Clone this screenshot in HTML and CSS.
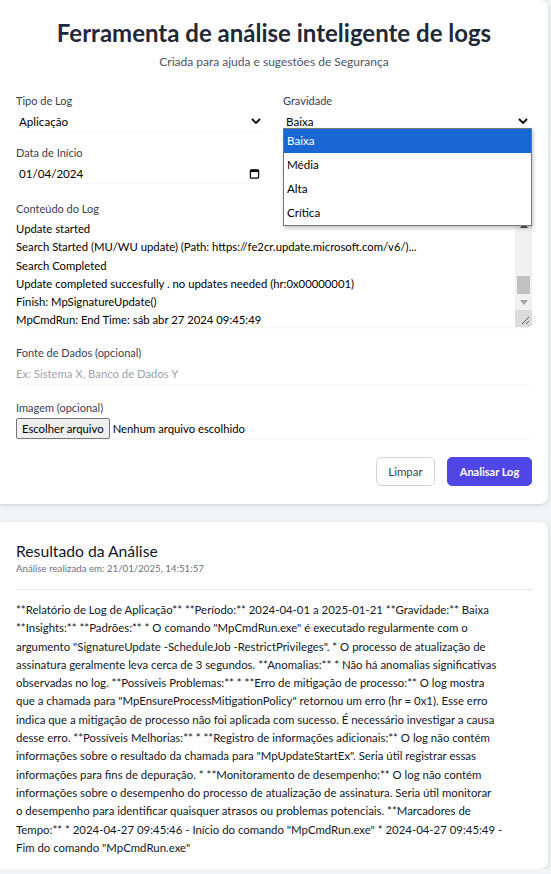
FILE: index.html
```html
<!DOCTYPE html>
<html lang="pt-BR">
<head>
<meta charset="utf-8">
<title>Ferramenta de análise inteligente de logs</title>
<link rel="stylesheet" href="styles.css">
</head>
<body>
<main class="page">
  <section class="card form-card">
    <h1 class="title">Ferramenta de análise inteligente de logs</h1>
    <p class="subtitle">Criada para ajuda e sugestões de Segurança</p>

    <div class="grid">
      <div class="field">
        <label class="label">Tipo de Log</label>
        <div class="control select">
          <span>Aplicação</span>
          <svg class="chev" viewBox="0 0 10 6" width="10" height="6"><path d="M1 1 L5 5 L9 1" fill="none" stroke="#000" stroke-width="1.8"/></svg>
        </div>
      </div>
      <div class="field gravity">
        <label class="label">Gravidade</label>
        <div class="control select">
          <span>Baixa</span>
          <svg class="chev" viewBox="0 0 10 6" width="10" height="6"><path d="M1 1 L5 5 L9 1" fill="none" stroke="#000" stroke-width="1.8"/></svg>
        </div>
        <ul class="dropdown">
          <li class="opt active">Baixa</li>
          <li class="opt">Média</li>
          <li class="opt">Alta</li>
          <li class="opt">Crítica</li>
        </ul>
      </div>
      <div class="field row2">
        <label class="label">Data de Início</label>
        <div class="control select">
          <span>01/04/2024</span>
          <svg class="cal" viewBox="0 0 12 12" width="11" height="11"><rect x="1.5" y="2" width="9" height="9" rx="1" fill="none" stroke="#000" stroke-width="1.3"/><rect x="1.5" y="2" width="9" height="2.4" fill="#000"/></svg>
        </div>
      </div>
    </div>

    <div class="field block">
      <label class="label">Conteúdo do Log</label>
      <div class="textarea">
        <div class="ta-text">
          <div>Update started</div>
          <div>Search Started (MU/WU update) (Path: https://fe2cr.update.microsoft.com/v6/)...</div>
          <div>Search Completed</div>
          <div>Update completed succesfully . no updates needed (hr:0x00000001)</div>
          <div>Finish: MpSignatureUpdate()</div>
          <div>MpCmdRun: End Time: sáb abr 27 2024 09:45:49</div>
        </div>
        <div class="scrollbar">
          <div class="track">
            <svg class="arrow" viewBox="0 0 8 5" width="8" height="5"><path d="M0 5 L4 0 L8 5 Z" fill="#505050"/></svg>
            <div class="thumb-space"><div class="thumb"></div></div>
            <svg class="arrow" viewBox="0 0 8 5" width="8" height="5"><path d="M0 0 L4 5 L8 0 Z" fill="#a3a3a3"/></svg>
          </div>
          <div class="resizer">
            <svg viewBox="0 0 10 10" width="10" height="10"><path d="M9 2 L2 9 M9 6 L6 9" stroke="#555" stroke-width="1"/></svg>
          </div>
        </div>
      </div>
    </div>

    <div class="field block">
      <label class="label">Fonte de Dados (opcional)</label>
      <div class="control input placeholder">Ex: Sistema X, Banco de Dados Y</div>
    </div>

    <div class="field block block-file">
      <label class="label">Imagem (opcional)</label>
      <div class="control input file">
        <span class="file-btn">Escolher arquivo</span>
        <span class="file-name">Nenhum arquivo escolhido</span>
      </div>
    </div>

    <div class="actions">
      <button class="btn btn-light">Limpar</button>
      <button class="btn btn-primary">Analisar Log</button>
    </div>
  </section>

  <section class="card result-card">
    <h2 class="result-title">Resultado da Análise</h2>
    <p class="result-date">Análise realizada em: 21/01/2025, 14:51:57</p>
    <hr class="divider">
    <p class="result-text">**Relatório de Log de Aplicação** **Período:** 2024-04-01 a 2025-01-21 **Gravidade:** Baixa<br>**Insights:** **Padrões:** * O comando "MpCmdRun.exe" é executado regularmente com o<br>argumento "SignatureUpdate -ScheduleJob -RestrictPrivileges". * O processo de atualização de<br>assinatura geralmente leva cerca de 3 segundos. **Anomalias:** * Não há anomalias significativas<br>observadas no log. **Possíveis Problemas:** * **Erro de mitigação de processo:** O log mostra<br>que a chamada para "MpEnsureProcessMitigationPolicy" retornou um erro (hr = 0x1). Esse erro<br>indica que a mitigação de processo não foi aplicada com sucesso. É necessário investigar a causa<br>desse erro. **Possíveis Melhorias:** * **Registro de informações adicionais:** O log não contém<br>informações sobre o resultado da chamada para "MpUpdateStartEx". Seria útil registrar essas<br>informações para fins de depuração. * **Monitoramento de desempenho:** O log não contém<br>informações sobre o desempenho do processo de atualização de assinatura. Seria útil monitorar<br>o desempenho para identificar quaisquer atrasos ou problemas potenciais. **Marcadores de<br>Tempo:** * 2024-04-27 09:45:46 - Início do comando "MpCmdRun.exe" * 2024-04-27 09:45:49 -<br>Fim do comando "MpCmdRun.exe"</p>
  </section>
</main>
</body>
</html>
```

FILE: styles.css
```css
* { box-sizing: border-box; }
html, body { margin: 0; padding: 0; }
body {
  background: #f3f4f6;
  font-family: "Lato", "Noto Sans", sans-serif;
  color: #111827;
  width: 551px;
  overflow: hidden;
}
.page {
  width: 548px;
  display: flex;
  flex-direction: column;
  gap: 18px;
}
.card {
  background: #fff;
  box-shadow: 0 1px 6px rgba(0,0,0,0.10), 0 1px 2px rgba(0,0,0,0.06);
}
.form-card {
  border-radius: 0 8px 8px 0;
  padding: 16px 16px 18px 16px;
}
.title {
  margin: 0;
  text-align: center;
  font-size: 24px;
  line-height: 34px;
  font-weight: 700;
  color: #1f2937;
}
.subtitle {
  margin: 3px 0 0;
  text-align: center;
  font-size: 12px;
  line-height: 18px;
  color: #4b5563;
}
.grid {
  margin-top: 22px;
  display: grid;
  grid-template-columns: 249px 249px;
  column-gap: 18px;
  row-gap: 14px;
}
.field { display: flex; flex-direction: column; position: relative; }
.label {
  font-size: 11px;
  line-height: 16px;
  color: #374151;
  margin-bottom: 2px;
}
.control {
  height: 20px;
  display: flex;
  align-items: center;
  font-size: 11.6px;
  color: #000;
  border-radius: 4px;
  box-shadow: 0 1px 2px rgba(0,0,0,0.04);
}
.select { justify-content: space-between; padding: 0 4px 0 3px; }
.cal { margin-right: 1px; }
.dropdown {
  position: absolute;
  left: 0;
  top: 35px;
  width: 249px;
  margin: 0;
  padding: 0;
  list-style: none;
  background: #fff;
  border: 1px solid #767676;
  box-shadow: 1px 2px 4px rgba(0,0,0,0.25);
  z-index: 5;
}
.opt {
  height: 24px;
  line-height: 24px;
  padding-left: 3px;
  font-size: 11.6px;
  color: #000;
}
.opt.active { background: #1a66d2; color: #fff; }
.block { margin-top: 18px; }
.block-file { margin-top: 16px; }
.textarea {
  height: 108px;
  display: flex;
  border-radius: 4px;
  overflow: hidden;
  box-shadow: 0 1px 2px rgba(0,0,0,0.05);
}
.ta-text {
  flex: 1;
  padding: 1px 0 0 0;
  font-size: 11.3px;
  line-height: 18.3px;
  color: #000;
  white-space: nowrap;
  overflow: hidden;
}
.scrollbar {
  width: 17px;
  display: flex;
  flex-direction: column;
}
.track {
  flex: 1;
  background: #f1f1f1;
  display: flex;
  flex-direction: column;
  align-items: center;
  padding: 4px 0 5px;
}
.thumb-space { flex: 1; display: flex; align-items: flex-end; width: 100%; padding: 0 2px 6px; }
.thumb { width: 100%; height: 18px; background: #c1c1c1; }
.resizer {
  height: 17px;
  background: #dcdcdc;
  display: flex;
  align-items: flex-end;
  justify-content: flex-end;
  padding: 0 2px 2px 0;
}
.input { height: 21px; padding-left: 0; }
.placeholder { color: #9ca3af; font-size: 11.3px; }
.file { gap: 3px; }
.file-btn {
  height: 21px;
  line-height: 19px;
  padding: 0 5px;
  background: #efefef;
  border: 1px solid #767676;
  border-radius: 2px;
  font-size: 11.3px;
  color: #000;
}
.file-name { font-size: 11.3px; }
.actions {
  margin-top: 18px;
  display: flex;
  justify-content: flex-end;
  gap: 12px;
}
.btn {
  height: 29px;
  border-radius: 5px;
  font-family: inherit;
  font-size: 11.5px;
  cursor: pointer;
}
.btn-light {
  width: 59px;
  padding: 0;
  background: #fff;
  border: 1px solid #d1d5db;
  color: #374151;
}
.btn-primary {
  width: 85px;
  padding: 0;
  background: #4f46e5;
  border: 1px solid #4f46e5;
  color: #fff;
  font-weight: 700;
  font-size: 11px;
}
.result-card {
  border-radius: 0 8px 8px 0;
  padding: 19px 16px 12px;
}
.result-title {
  margin: 0;
  font-size: 15.7px;
  line-height: 20px;
  font-weight: 400;
  color: #111827;
}
.result-date {
  margin: 1px 0 0;
  font-size: 9.7px;
  line-height: 12px;
  color: #6b7280;
}
.divider {
  margin: 15px 0 0;
  border: 0;
  border-top: 1px solid #e5e7eb;
}
.result-text {
  margin: 11px 0 0;
  font-size: 11.4px;
  line-height: 18.3px;
  color: #111827;
}
```
